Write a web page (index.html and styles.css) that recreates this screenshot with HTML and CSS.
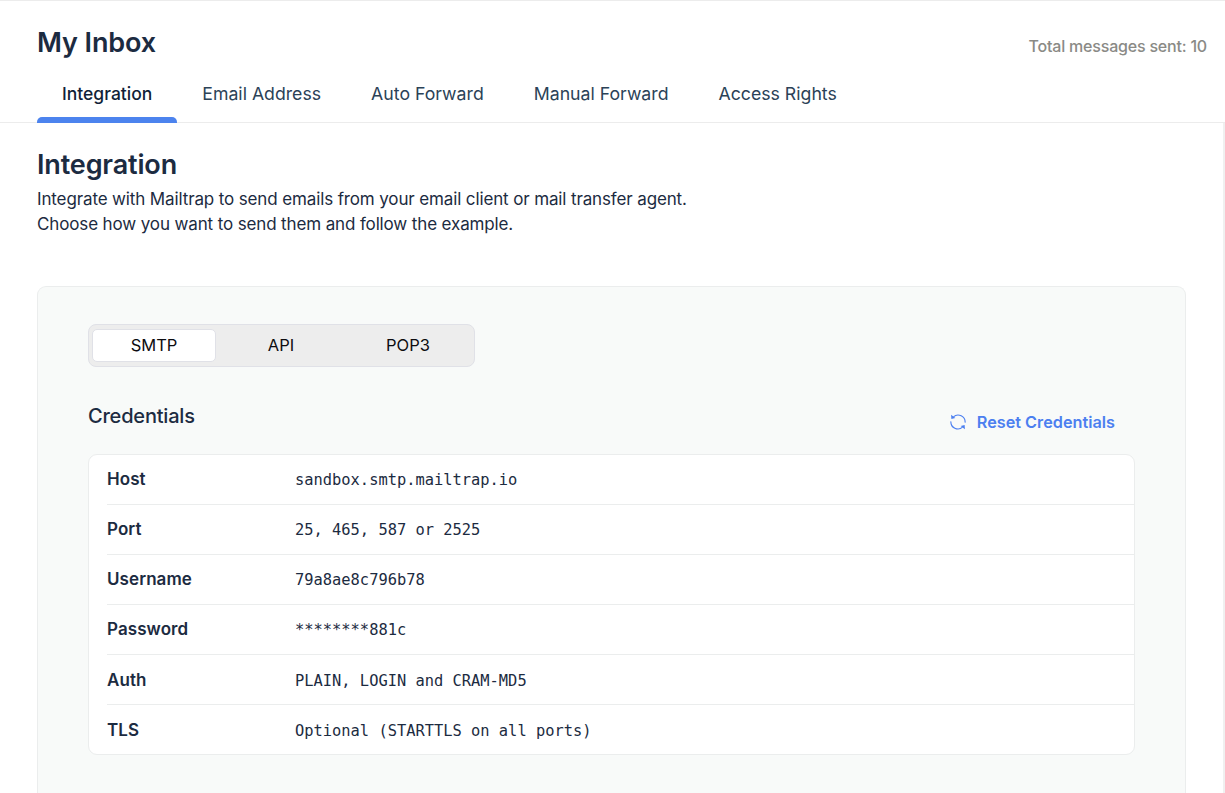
FILE: index.html
```html
<!DOCTYPE html>
<html lang="en">
<head>
<meta charset="utf-8">
<title>My Inbox</title>
<link rel="stylesheet" href="styles.css">
</head>
<body>
<header class="header">
  <div class="title-row">
    <h1 class="inbox-title">My Inbox</h1>
    <span class="sent-count">Total messages sent: 10</span>
  </div>
  <nav class="tabs">
    <a class="tab tab-active">Integration</a>
    <a class="tab">Email Address</a>
    <a class="tab">Auto Forward</a>
    <a class="tab">Manual Forward</a>
    <a class="tab">Access Rights</a>
  </nav>
</header>
<main class="content">
  <h2 class="section-title">Integration</h2>
  <p class="intro">Integrate with Mailtrap to send emails from your email client or mail transfer agent.<br>Choose how you want to send them and follow the example.</p>
  <section class="panel">
    <div class="segment">
      <span class="option option-active">SMTP</span>
      <span class="option">API</span>
      <span class="option">POP3</span>
    </div>
    <div class="cred-head">
      <h3 class="cred-title">Credentials</h3>
      <a class="reset">
        <svg class="reset-icon" viewBox="0 0 16 16" width="16" height="16" fill="none" stroke="currentColor" stroke-width="1.1">
          <path d="M3.4 2.9A7 7 0 0 1 15.1 8.6"/>
          <path d="M12.6 13.1A7 7 0 0 1 .9 7.4"/>
          <path d="M1.1.8 1.4 4.9 5.3 3.9Z" fill="currentColor" stroke="none"/>
          <path d="M14.9 15.2 14.6 11.1 10.7 12.1Z" fill="currentColor" stroke="none"/>
        </svg>
        <span>Reset Credentials</span>
      </a>
    </div>
    <dl class="table">
      <div class="row"><dt class="key">Host</dt><dd class="value">sandbox.smtp.mailtrap.io</dd></div>
      <div class="row"><dt class="key">Port</dt><dd class="value">25, 465, 587 or 2525</dd></div>
      <div class="row"><dt class="key">Username</dt><dd class="value">79a8ae8c796b78</dd></div>
      <div class="row"><dt class="key">Password</dt><dd class="value">********881c</dd></div>
      <div class="row row-low"><dt class="key">Auth</dt><dd class="value">PLAIN, LOGIN and CRAM-MD5</dd></div>
      <div class="row row-low"><dt class="key">TLS</dt><dd class="value">Optional (STARTTLS on all ports)</dd></div>
    </dl>
  </section>
</main>
</body>
</html>
```
FILE: styles.css
```css
* { box-sizing: border-box; }
body {
  margin: 0;
  height: 793px;
  display: flex;
  flex-direction: column;
  background: #fff;
  color: #1c2b41;
  font-family: Inter, "Liberation Sans", sans-serif;
}
h1, h2, h3, p, dl, dd { margin: 0; }
.header {
  height: 123px;
  flex: none;
  border-top: 1px solid #ececec;
  border-bottom: 1px solid #ececec;
}
.title-row {
  display: flex;
  justify-content: space-between;
  height: 63px;
  padding: 25px 18px 0 37px;
}
.inbox-title { font-size: 27px; line-height: 34px; font-weight: 600; letter-spacing: -0.1px; }
.sent-count {
  padding-top: 8px;
  font-size: 16px;
  line-height: 24px;
  font-weight: 500;
  letter-spacing: -0.2px;
  color: #8a8a86;
}
.tabs { display: flex; height: 59px; padding-left: 37px; }
.tab {
  padding: 18px 25px 0;
  font-size: 17.7px;
  line-height: 24px;
  color: #2b4257;
}
.tab-active {
  position: relative;
  font-size: 17.5px;
  font-weight: 500;
  color: #101f38;
}
.tab-active::after {
  content: "";
  position: absolute;
  inset: auto 0 0 0;
  height: 6px;
  border-radius: 5px 5px 0 0;
  background: #4c83ee;
}
.content {
  flex: 1;
  min-height: 0;
  display: flex;
  flex-direction: column;
  padding: 25px 37px 0;
  border-right: 2px solid #f0f0f0;
}
.section-title { font-size: 27px; line-height: 34px; font-weight: 600; letter-spacing: -0.15px; }
.intro { margin-top: 5px; font-size: 17px; line-height: 25px; letter-spacing: -0.13px; }
.panel {
  flex: 1;
  width: 1149px;
  margin-top: 49px;
  padding: 37px 50px 0;
  border: 1px solid #ebeded;
  border-bottom: 0;
  border-radius: 9px 9px 0 0;
  background: #f8faf9;
}
.segment {
  display: flex;
  width: 387px;
  height: 43px;
  padding: 4px 4px 4px 3px;
  gap: 3px;
  border: 1px solid #e0e1e7;
  border-radius: 8px;
  background: #ededed;
}
.option {
  width: 124px;
  flex: none;
  border: 1px solid transparent;
  border-radius: 5px;
  color: #0c0c10;
  font-size: 16.5px;
  line-height: 31px;
  text-align: center;
}
.option-active { border-color: #e0e1e7; background: #fff; }
.cred-head {
  display: flex;
  justify-content: space-between;
  height: 87px;
  padding: 36px 20px 0 0;
}
.cred-title { font-size: 20px; line-height: 26px; font-weight: 500; letter-spacing: -0.2px; }
.reset {
  display: flex;
  gap: 11px;
  height: 24px;
  margin-top: 7px;
  font-size: 16.25px;
  line-height: 24px;
  font-weight: 600;
  color: #4c7ff0;
}
.reset-icon { margin-top: 4px; }
.table {
  height: 301px;
  padding-left: 18px;
  border: 1px solid #ebeded;
  border-radius: 9px;
  background: #fff;
}
.row { display: flex; height: 50px; border-bottom: 1px solid #ebeded; }
.row:last-child { border-bottom: 0; }
.row-low { padding-top: 1px; }
.key { width: 188px; font-size: 17px; line-height: 49px; font-weight: 600; letter-spacing: 0.08px; }
.value {
  padding-top: 1px;
  font-family: "DejaVu Sans Mono", "Liberation Mono", monospace;
  font-size: 15.4px;
  line-height: 48px;
}
```
